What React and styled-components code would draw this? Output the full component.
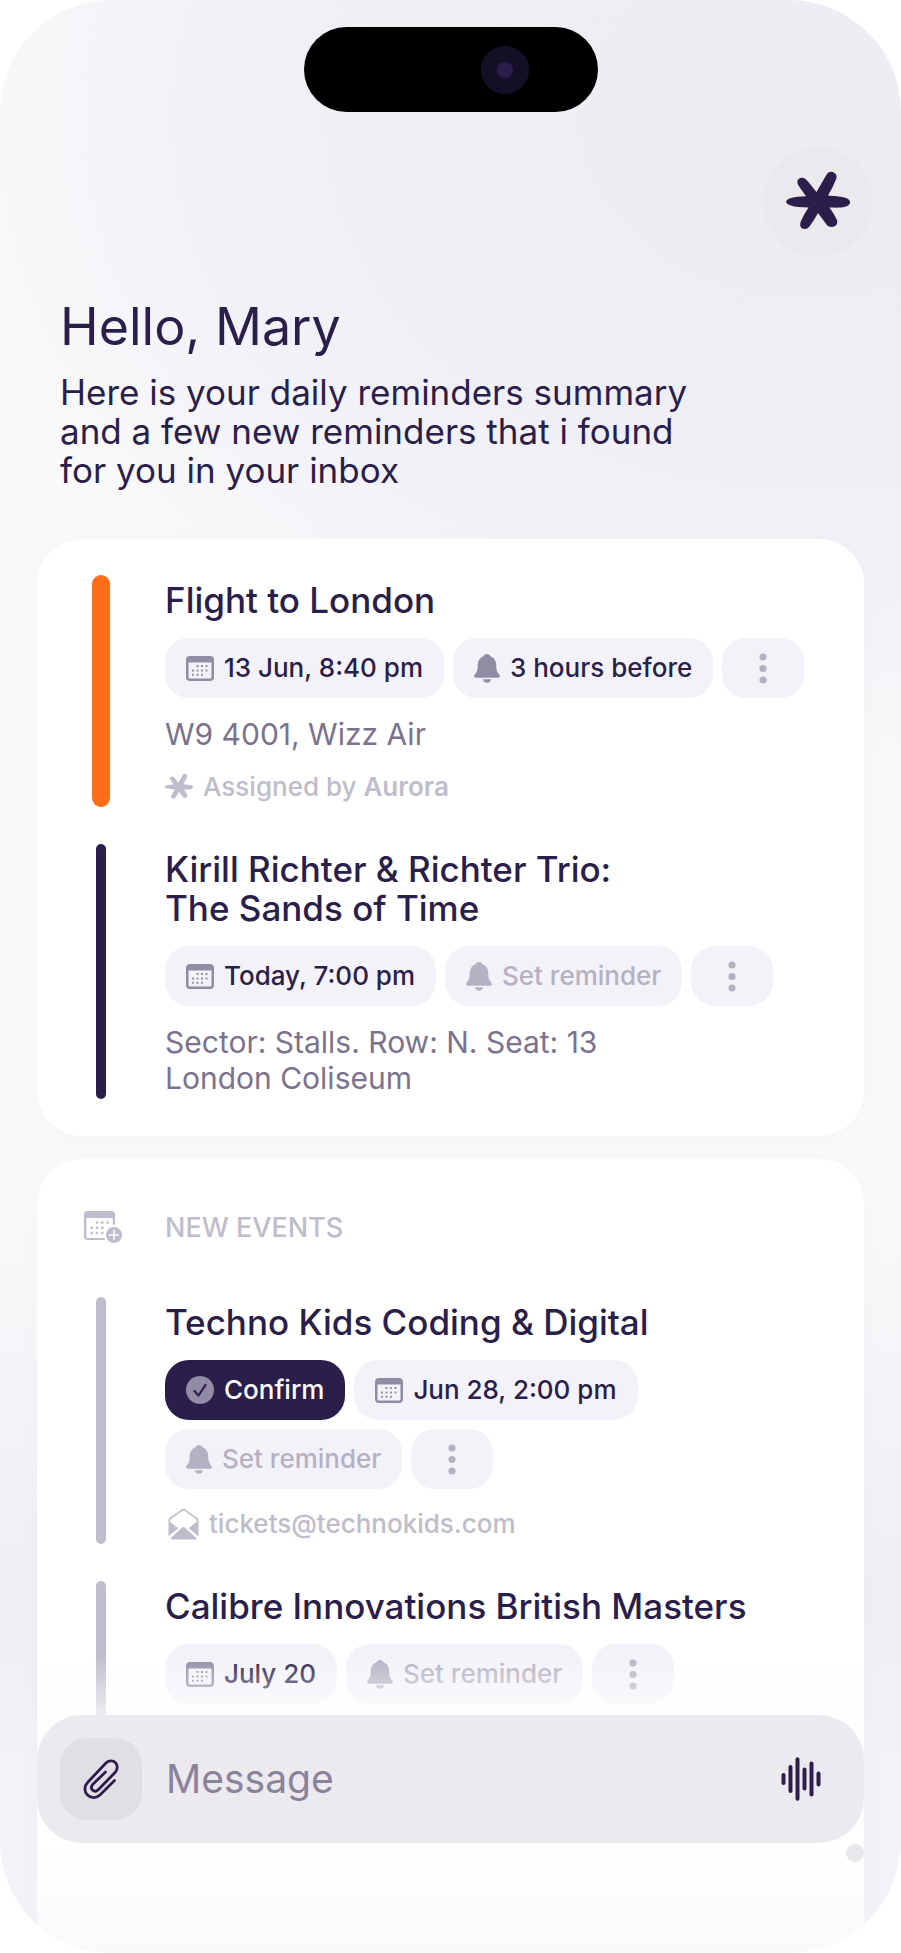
import React, { useState } from "react";
import styled, { createGlobalStyle } from "styled-components";

const COLOR = {
  ink: "#2a1e4a",
  muted: "#7b728f",
  icon: "#918ba3",
  pale: "#bfbccb",
  chip: "#f3f2f8",
  orange: "#ff6d1a",
};

const GlobalStyle = createGlobalStyle`
  *, *::before, *::after {
    box-sizing: border-box;
  }
  body {
    margin: 0;
    background: #fff;
  }
  body, button, input {
    font-family: Inter, "Liberation Sans", sans-serif;
  }
  h1, h2, h3, p, ul {
    margin: 0;
    padding: 0;
    font-weight: 400;
  }
  svg {
    display: block;
    flex: none;
  }
`;

const StyledPhone = styled.div`
  position: relative;
  display: flex;
  flex-direction: column;
  min-height: 100vh;
  padding: 0 37px;
  overflow: hidden;
  color: ${COLOR.ink};
  border-radius: 112px;
  background:
    radial-gradient(ellipse 860px 660px at 90% 6%, #eeecf2 0%, #efeef4 45%, #f3f2f8 75%, rgba(249, 249, 249, 0) 100%),
    linear-gradient(180deg, #f9f9f9 0%, #f9f9f9 62%, #f3f2f8 74%, #efeef4 82%, #f3f2f8 90%, #f3f2f8 100%);
`;

const StyledIsland = styled.div`
  display: flex;
  align-items: center;
  justify-content: flex-end;
  align-self: center;
  width: 294px;
  height: 85px;
  margin-top: 27px;
  padding-right: 69px;
  border-radius: 43px;
  background: #000;
`;

const StyledCamera = styled.span`
  width: 48px;
  height: 48px;
  border: 16px solid #150f25;
  border-radius: 50%;
  background: ${COLOR.ink};
`;

const StyledAssistant = styled.button`
  display: grid;
  place-items: center;
  align-self: flex-end;
  width: 110px;
  height: 110px;
  margin: 35px -9px 0 0;
  padding: 0;
  border: 0;
  border-radius: 50%;
  color: ${COLOR.ink};
  background: #ece9ee;
  cursor: pointer;
`;

const StyledGreeting = styled.header`
  padding: 38px 23px 0;
`;

const StyledHello = styled.h1`
  font-size: 52px;
  line-height: 64px;
`;

const StyledSummary = styled.p`
  margin-top: 14px;
  font-size: 35px;
  line-height: 39px;
`;

const StyledCard = styled.section`
  display: flex;
  flex-direction: column;
  gap: 37px;
  padding: 36px 37px 37px 33px;
  border-radius: 45px;
  background: #fff;
  box-shadow: 0 4px 24px rgba(42, 30, 74, 0.02);
`;

const StyledReminders = styled(StyledCard)`
  margin-top: 49px;
`;

const StyledNewEvents = styled(StyledCard)`
  flex: 1;
  margin-top: 23px;
  padding-bottom: 160px;
  border-radius: 45px 45px 0 0;
`;

const StyledSectionHead = styled.div`
  display: grid;
  grid-template-columns: 48px 1fr;
  align-items: center;
  gap: 33px;
  height: 65px;
  padding-left: 14px;
  color: ${COLOR.pale};

  h2 {
    font-size: 27px;
    font-weight: 500;
    line-height: 34px;
  }
`;

const StyledEvent = styled.article`
  display: grid;
  grid-template-columns: 62px 1fr;
  gap: 33px;
`;

const StyledBar = styled.span`
  justify-self: center;
  width: ${({ $wide }) => ($wide ? 18 : 10)}px;
  border-radius: 9px;
  background: ${({ $color }) => $color};
`;

const StyledBody = styled.div`
  display: flex;
  flex-direction: column;
  gap: 18px;
  min-width: 0;
  padding: 6px 0 ${({ $continues }) => ($continues ? 60 : 3)}px;
`;

const StyledTitle = styled.h3`
  font-size: 35px;
  font-weight: 500;
  line-height: 39px;
`;

const StyledChips = styled.div`
  display: flex;
  flex-wrap: wrap;
  gap: 9px;
`;

const StyledChip = styled.button`
  display: flex;
  align-items: center;
  justify-content: center;
  gap: 10px;
  height: 60px;
  min-width: 82px;
  padding: 0 21px;
  border: 0;
  border-radius: 24px;
  font-size: 26px;
  font-weight: 500;
  line-height: 34px;
  white-space: nowrap;
  cursor: pointer;
  color: ${({ $tone }) =>
    $tone === "solid" ? "#fff" : $tone === "empty" ? "#b5b1c2" : COLOR.ink};
  background: ${({ $tone }) => ($tone === "solid" ? COLOR.ink : COLOR.chip)};

  svg {
    color: ${({ $tone }) => ($tone === "empty" ? "#b5b1c2" : COLOR.icon)};
  }
`;

const StyledDetail = styled.p`
  font-size: 30px;
  line-height: 36px;
  color: ${COLOR.muted};
`;

const StyledSource = styled.p`
  display: flex;
  align-items: center;
  gap: 10px;
  font-size: 26px;
  font-weight: 500;
  line-height: 34px;
  color: ${COLOR.pale};

  strong {
    font-weight: 600;
  }
`;

const StyledDock = styled.div`
  position: absolute;
  right: 37px;
  bottom: 0;
  left: 37px;
  padding: 60px 0 110px;
  background: linear-gradient(
    180deg,
    rgba(253, 253, 254, 0) 0,
    rgba(253, 253, 254, 0.75) 60px,
    rgba(255, 255, 255, 0.4) 190px,
    rgba(249, 249, 249, 0.9) 100%
  );
`;

const StyledComposer = styled.form`
  position: relative;
  display: flex;
  align-items: center;
  gap: 24px;
  height: 128px;
  padding: 0 43px 0 23px;
  border-radius: 45px;
  background: #eceaef;

  &::after {
    content: "";
    position: absolute;
    right: 0;
    bottom: -19px;
    width: 18px;
    height: 18px;
    border-radius: 50%;
    background: #e9e7ec;
  }
`;

const StyledIconButton = styled.button`
  display: grid;
  place-items: center;
  flex: none;
  padding: 0;
  border: 0;
  color: ${COLOR.ink};
  background: none;
  cursor: pointer;
`;

const StyledAttach = styled(StyledIconButton)`
  width: 82px;
  height: 82px;
  border-radius: 27px;
  background: #e1dfe5;
`;

const StyledInput = styled.input`
  flex: 1;
  min-width: 0;
  padding: 0;
  border: 0;
  outline: 0;
  font-size: 39px;
  line-height: 48px;
  color: ${COLOR.ink};
  background: none;

  &::placeholder {
    color: #8a839c;
    opacity: 1;
  }
`;

const StarIcon = ({ size = 64 }) => (
  <svg width={size} height={size} viewBox="0 0 64 64" fill="currentColor" aria-hidden="true">
    <path d="M30.500 22 L40 5.500 C42 2 44.500 1.400 46.500 2 C50 3 51.500 6 50 9.500 Q46.500 18 42 25.500 C49 26 56 26.500 60 28 C65.500 30 65.500 34.500 60 36.500 C56 38 49 37.700 43.500 37.500 Q47.500 43 50.500 49 C52.500 53 50.500 57 46 57 C42.500 57 41 55.500 39 52.500 L32 43 Q28 50.500 23.500 56.500 C21.500 59 18.500 59.500 16.500 58.500 C14 57.500 13.500 54 15 51 Q18 44 22.500 37.500 C15 37 9 37 5 35.500 C-1.500 33.500 -1.500 30 5 28 C9 26.800 14 26.400 20 26.200 Q15.500 20 12.500 15.500 C10 11.500 12 8 15.500 7.800 C18 7.600 20 9 22 11.500 Z" />
  </svg>
);

const CalendarDots = () =>
  [
    [11.5, 10],
    [16, 10],
    [20.5, 10],
    [7, 14.5],
    [11.5, 14.5],
    [16, 14.5],
    [20.5, 14.5],
    [7, 18.7],
    [11.5, 18.7],
    [16, 18.7],
  ].map(([x, y]) => (
    <rect key={`${x}-${y}`} x={x - 1} y={y - 1} width="2" height="2" rx="0.500" />
  ));

const CalendarIcon = () => (
  <svg width="28" height="25" viewBox="0 0 28 25" fill="currentColor" aria-hidden="true">
    <path
      fillRule="evenodd"
      d="M4 0h20a4 4 0 0 1 4 4v17a4 4 0 0 1-4 4H4a4 4 0 0 1-4-4V4a4 4 0 0 1 4-4zM2.500 6.500V21A1.500 1.500 0 0 0 4 22.500h20A1.500 1.500 0 0 0 25.500 21V6.500z"
    />
    <CalendarDots />
  </svg>
);

const CalendarPlusIcon = () => (
  <svg width="38" height="33" viewBox="0 0 38 33" fill="currentColor" aria-hidden="true">
    <path d="M4 0h23a4 4 0 0 1 4 4v9.500a9 9 0 0 0-2.200.3V7H2.300v18.500A1.500 1.500 0 0 0 3.800 27H20.500q0 1 .6 2H4a4 4 0 0 1-4-4V4a4 4 0 0 1 4-4z" />
    {[
      [13, 11.5],
      [18.3, 11.5],
      [23.5, 11.5],
      [7.8, 16.8],
      [13, 16.8],
      [18.3, 16.8],
      [7.8, 22],
      [13, 22],
      [18.3, 22],
    ].map(([x, y]) => (
      <rect key={`${x}-${y}`} x={x - 1.2} y={y - 1.2} width="2.400" height="2.400" rx="0.600" />
    ))}
    <circle cx="30" cy="24" r="8" />
    <path d="M30 19.500v9M25.500 24h9" stroke="#fff" strokeWidth="1.600" strokeLinecap="round" />
  </svg>
);

const BellIcon = () => (
  <svg width="26" height="29" viewBox="0 0 26 29" fill="currentColor" aria-hidden="true">
    <path d="M13 0c1.800 0 3 1 3.600 2.300C20.500 4 22.300 7.500 22.300 11.500c0 5 1 6.800 2.900 9 1.400 1.700.8 3.200-1.200 3.200H2c-2 0-2.600-1.500-1.200-3.200 1.900-2.200 2.900-4 2.900-9C3.700 7.500 5.500 4 9.400 2.300 10 1 11.200 0 13 0z" />
    <path d="M8.800 25.200h8.400C16.600 27.500 15 28.800 13 28.800s-3.600-1.300-4.200-3.600z" />
  </svg>
);

const MoreIcon = () => (
  <svg width="8" height="31" viewBox="0 0 8 31" fill="currentColor" aria-hidden="true">
    <circle cx="4" cy="4" r="3.600" />
    <circle cx="4" cy="15.500" r="3.600" />
    <circle cx="4" cy="27" r="3.600" />
  </svg>
);

const CheckIcon = () => (
  <svg width="28" height="28" viewBox="0 0 28 28" aria-hidden="true">
    <circle cx="14" cy="14" r="14" fill="currentColor" />
    <path
      d="M8.500 15l4 4.500 7-10.500"
      fill="none"
      stroke={COLOR.ink}
      strokeWidth="2.200"
      strokeLinecap="round"
      strokeLinejoin="round"
    />
  </svg>
);

const MailIcon = () => (
  <svg width="34" height="32" viewBox="-3 0 35 32" fill="currentColor" aria-hidden="true">
    <path
      d="M1.500 13V12Q1.500 11 2.500 10.300L14.500 1.700Q16 .7 17.500 1.700L29.500 10.300Q30.500 11 30.500 12V13"
      fill="none"
      stroke="currentColor"
      strokeWidth="1.800"
    />
    <path d="M.6 12.500l10 7.800L.6 28.500z" />
    <path d="M31.400 12.500l-10 7.800 10 8.200z" />
    <path d="M2.500 31L14 20q2-1.700 4 0L29.500 31q-.8 1-2 1h-23q-1.200 0-2-1z" />
  </svg>
);

const ClipIcon = () => (
  <svg
    width="36"
    height="40"
    viewBox="0 0 36 40"
    fill="none"
    stroke="currentColor"
    strokeWidth="2.800"
    strokeLinecap="round"
    strokeLinejoin="round"
    aria-hidden="true"
  >
    <path d="M31.500 21.500L17.500 35.500c-4 4-9.500 4-13 .5s-3.500-9 .5-13L22.500 4.500c3-3.200 7.500-3.400 10-.8s2.300 7-.7 10L15.500 30.500c-2 2-4.400 2.200-6 .6s-1.400-4 .6-6L22.500 13" />
  </svg>
);

const WaveIcon = () => (
  <svg
    width="40"
    height="44"
    viewBox="0 0 40 44"
    stroke="currentColor"
    strokeWidth="4"
    strokeLinecap="round"
    aria-hidden="true"
  >
    <path d="M2.500 18v8M9.500 10v24M16.500 2.300v39.400M23.500 12.500v19M30.500 6.500v31M37.500 16.500v11" />
  </svg>
);

const CHIP_ICONS = {
  date: CalendarIcon,
  bell: BellIcon,
  confirm: CheckIcon,
};

const Chip = ({ icon, tone, children }) => {
  const Icon = CHIP_ICONS[icon];
  return (
    <StyledChip type="button" $tone={tone}>
      <Icon />
      {children}
    </StyledChip>
  );
};

const Event = ({ title, chips, color, wide, continues, children }) => (
  <StyledEvent>
    <StyledBar $color={color} $wide={wide} />
    <StyledBody $continues={continues}>
      <StyledTitle>{title}</StyledTitle>
      <StyledChips>
        {chips.map(({ icon, label, tone }) => (
          <Chip key={label} icon={icon} tone={tone}>
            {label}
          </Chip>
        ))}
        <StyledChip type="button" $tone="empty" aria-label="More">
          <MoreIcon />
        </StyledChip>
      </StyledChips>
      {children}
    </StyledBody>
  </StyledEvent>
);

const SET_REMINDER = { icon: "bell", label: "Set reminder", tone: "empty" };

const Composer = () => {
  const [message, setMessage] = useState("");
  return (
    <StyledComposer onSubmit={(e) => e.preventDefault()}>
      <StyledAttach type="button" aria-label="Attach a file">
        <ClipIcon />
      </StyledAttach>
      <StyledInput
        aria-label="Message"
        placeholder="Message"
        value={message}
        onChange={(e) => setMessage(e.target.value)}
      />
      <StyledIconButton type="button" aria-label="Record voice">
        <WaveIcon />
      </StyledIconButton>
    </StyledComposer>
  );
};

const App = () => (
  <>
    <GlobalStyle />
    <StyledPhone>
      <StyledIsland>
        <StyledCamera />
      </StyledIsland>
      <StyledAssistant type="button" aria-label="Aurora">
        <StarIcon />
      </StyledAssistant>
      <StyledGreeting>
        <StyledHello>Hello, Mary</StyledHello>
        <StyledSummary>
          Here is your daily reminders summary
          <br />
          and a few new reminders that i found
          <br />
          for you in your inbox
        </StyledSummary>
      </StyledGreeting>

      <StyledReminders>
        <Event
          title="Flight to London"
          color={COLOR.orange}
          wide
          chips={[
            { icon: "date", label: "13 Jun, 8:40 pm" },
            { icon: "bell", label: "3 hours before" },
          ]}
        >
          <StyledDetail>W9 4001, Wizz Air</StyledDetail>
          <StyledSource>
            <StarIcon size={28} />
            <span>
              Assigned by <strong>Aurora</strong>
            </span>
          </StyledSource>
        </Event>
        <Event
          title={
            <>
              Kirill Richter &amp; Richter Trio:
              <br />
              The Sands of Time
            </>
          }
          color={COLOR.ink}
          chips={[{ icon: "date", label: "Today, 7:00 pm" }, SET_REMINDER]}
        >
          <StyledDetail>
            Sector: Stalls. Row: N. Seat: 13
            <br />
            London Coliseum
          </StyledDetail>
        </Event>
      </StyledReminders>

      <StyledNewEvents>
        <StyledSectionHead>
          <CalendarPlusIcon />
          <h2>NEW EVENTS</h2>
        </StyledSectionHead>
        <Event
          title="Techno Kids Coding & Digital"
          color={COLOR.pale}
          chips={[
            { icon: "confirm", label: "Confirm", tone: "solid" },
            { icon: "date", label: "Jun 28, 2:00 pm" },
            SET_REMINDER,
          ]}
        >
          <StyledSource>
            <MailIcon />
            tickets@technokids.com
          </StyledSource>
        </Event>
        <Event
          title="Calibre Innovations British Masters"
          color={COLOR.pale}
          continues
          chips={[{ icon: "date", label: "July 20" }, SET_REMINDER]}
        />
      </StyledNewEvents>

      <StyledDock>
        <Composer />
      </StyledDock>
    </StyledPhone>
  </>
);

export default App;
